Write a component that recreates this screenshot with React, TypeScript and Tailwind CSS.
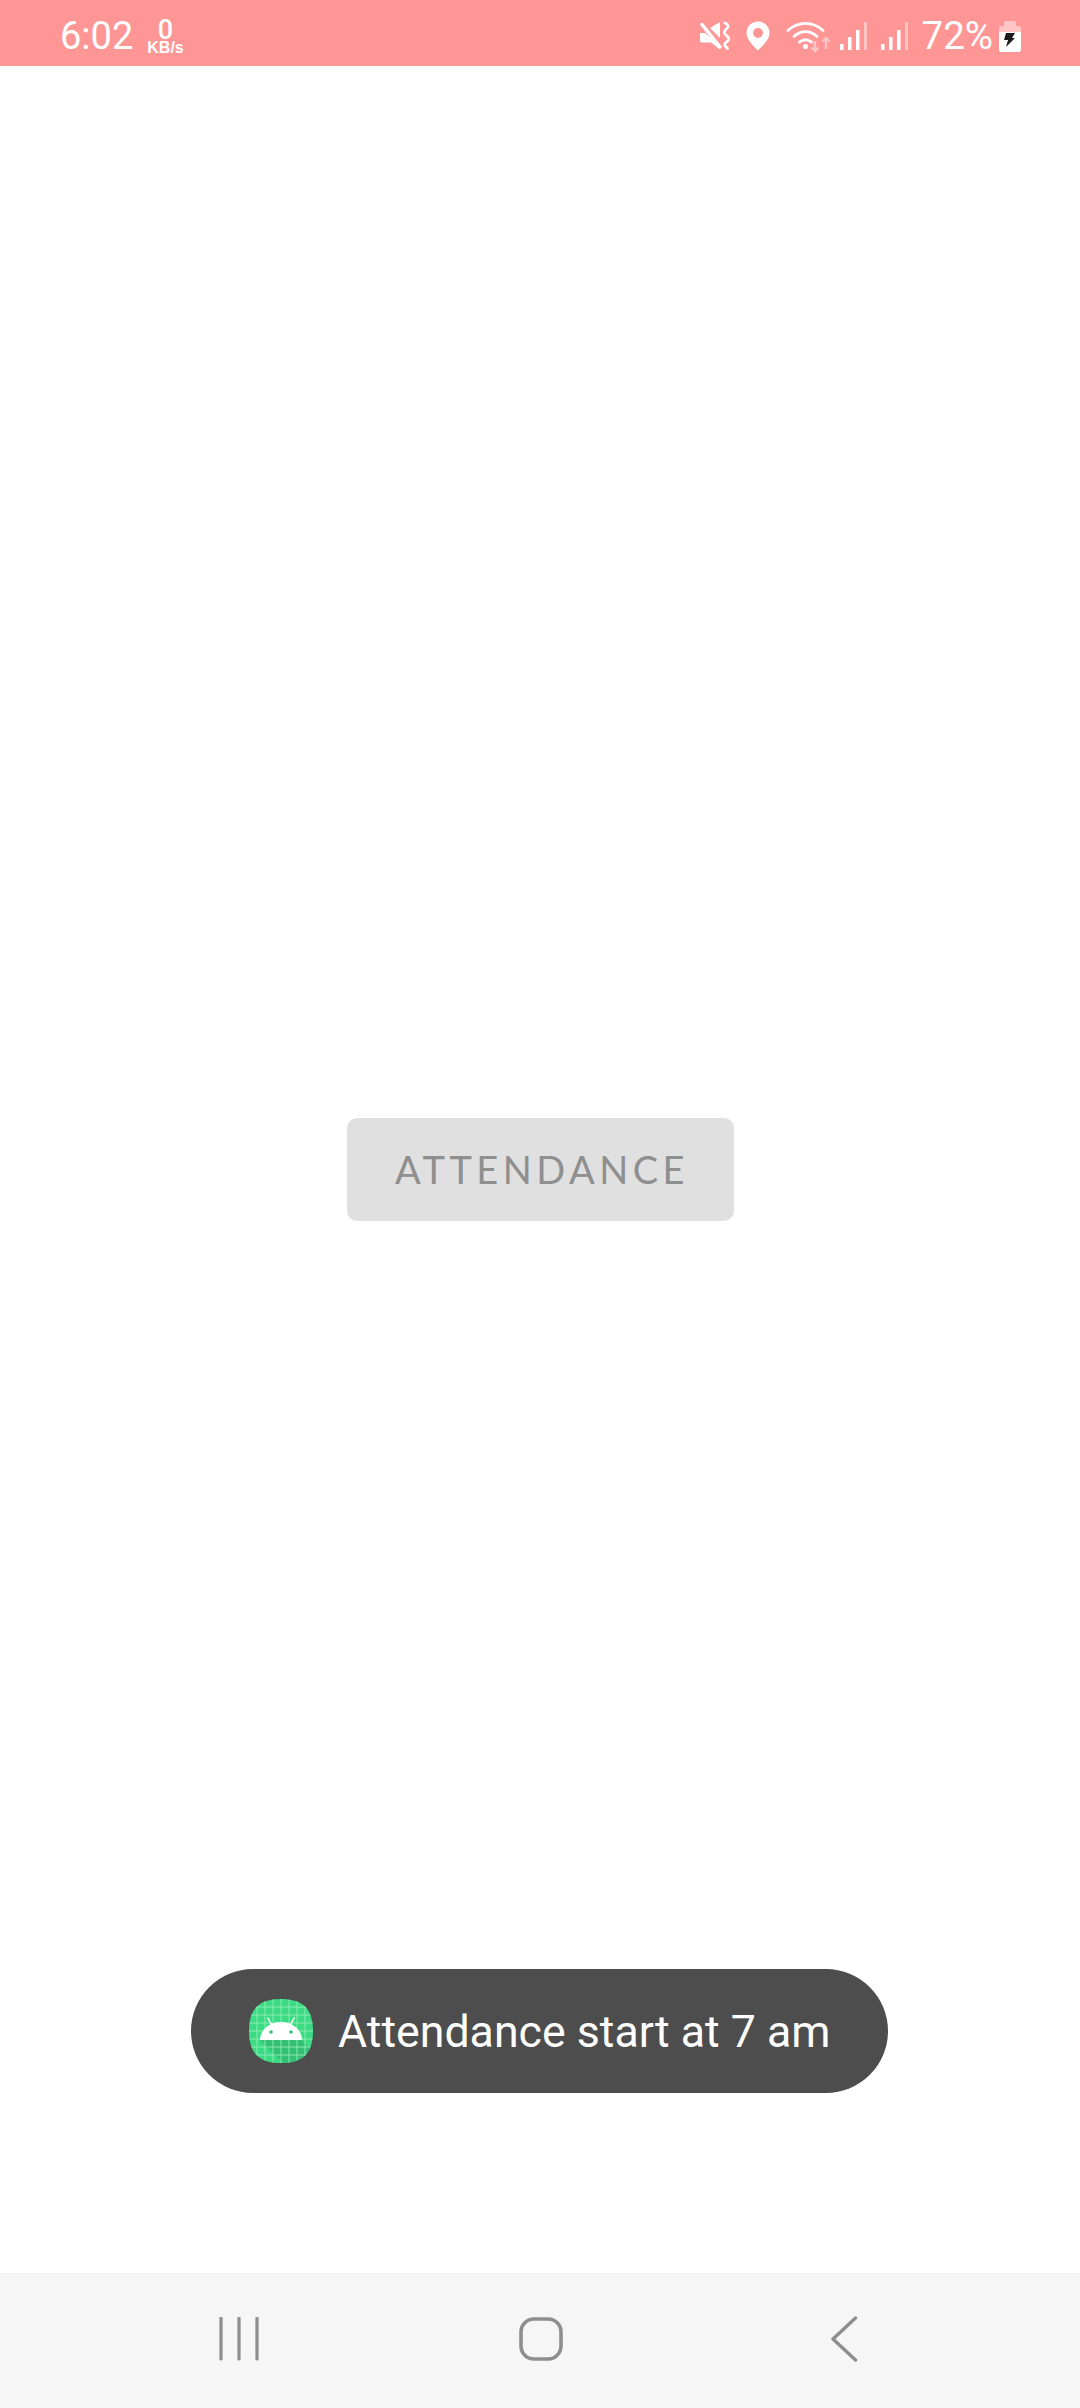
const roboto = "font-['Roboto',sans-serif]";

function Mute() {
  return (
    <svg width="30" height="30" viewBox="0 0 30 30" className="block">
      <path d="M0 12h5L20 25v3.500l-9-7H2a2 2 0 0 1-2-2z" fill="#fff" />
      <path d="M2 3.500L20 26" stroke="#fff" strokeWidth="3.500" strokeLinecap="round" />
      <path d="M10 7L20 1V17z" fill="#fff" />
      <path d="M25 2c4 2 4 4 1 6.500s-2 4 1 6.500 2 4-1 6.500 0 4 1.500 6" stroke="#fff" strokeWidth="2.800" fill="none" strokeLinecap="round" />
    </svg>
  );
}

function Pin() {
  return (
    <svg width="24" height="30" viewBox="0 0 24 30" className="block">
      <path fillRule="evenodd" d="M12 .5C5.4.5.5 5.6.5 12c0 6.800 7.500 13.500 11.500 17.500C16 25.500 23.500 18.800 23.500 12 23.500 5.600 18.600.5 12 .5zM12 7a5 5 0 1 1 0 10 5 5 0 0 1 0-10z" fill="#fff" />
    </svg>
  );
}

function Wifi() {
  return (
    <svg width="46" height="33" viewBox="0 0 46 33" className="block">
      <g fill="none" stroke="#fff" strokeWidth="2.800" strokeLinecap="round">
        <path d="M2 10.500C12 1 27 1 37 10.500" />
        <path d="M8 16.500C15 10 24 10 31 16.500" />
        <path d="M13.500 22c3.500-3 8.500-3 12 0" />
      </g>
      <circle cx="19.500" cy="26.500" r="2.600" fill="#fff" />
      <path d="M29 21v10m-3.500-3.500L29 31l3.500-3.500" fill="none" stroke="#ffc4c4" strokeWidth="2.400" />
      <path d="M40 29V18m-3.500 3.500L40 18l3.500 3.500" fill="none" stroke="#ffc4c4" strokeWidth="2.400" />
    </svg>
  );
}

function Signal() {
  return (
    <svg width="27" height="30" viewBox="0 0 27 30" className="block">
      <rect x="0" y="23" width="3.500" height="6" fill="#fff" />
      <rect x="8" y="16" width="3.500" height="13" fill="#fff" />
      <rect x="16" y="9" width="3.500" height="20" fill="#fff" />
      <rect x="24" y="1" width="3" height="28" fill="#ffc4c4" />
    </svg>
  );
}

function Battery() {
  return (
    <svg width="22" height="31" viewBox="0 0 22 31" className="block">
      <path d="M7 0h8a2 2 0 0 1 2 2v3h3a2 2 0 0 1 2 2v4H0V7a2 2 0 0 1 2-2h3V2a2 2 0 0 1 2-2z" fill="#ffc4c4" />
      <path d="M0 11h22v18a2 2 0 0 1-2 2H2a2 2 0 0 1-2-2z" fill="#fff" />
      <path d="M7 12h9l-3 5h3L7 26l2-7H5z" fill="#1c1c1c" />
    </svg>
  );
}

function AndroidIcon() {
  const grid = [8, 16, 24, 32, 40, 48, 56];
  return (
    <svg width="64" height="64" viewBox="0 0 64 64" className="block">
      <defs>
        <clipPath id="squircle">
          <path d="M32 0C52 0 64 8 64 32S52 64 32 64 0 56 0 32 12 0 32 0z" />
        </clipPath>
      </defs>
      <g clipPath="url(#squircle)">
        <rect width="64" height="64" fill="#3ddc84" />
        <path d="M11 41H53L64 52V64H34z" fill="#35bf74" />
        <g stroke="#8aeab4" strokeWidth="1">
          {grid.map((p) => (
            <path key={p} d={`M${p} 0V64M0 ${p}H64`} />
          ))}
        </g>
      </g>
      <path d="M18.500 18.500l4 7M45.500 18.500l-4 7" stroke="#fff" strokeWidth="1.500" />
      <path d="M11 41a21 18 0 0 1 42 0z" fill="#fff" />
      <circle cx="22" cy="33" r="1.800" fill="#35bf74" />
      <circle cx="42" cy="33" r="1.800" fill="#35bf74" />
    </svg>
  );
}

export default function App() {
  return (
    <div className="relative flex h-[2408px] w-[1080px] flex-col overflow-hidden bg-white">
      <header className={`flex h-[66px] items-center justify-between bg-[#ff9696] pl-[60px] pr-[59px] pt-[6px] text-white ${roboto}`}>
        <div className="flex items-center">
          <span className="text-[38px] leading-none">6:02</span>
          <div className="ml-[14px] flex flex-col items-center">
            <span className="text-[27px] font-medium leading-[22px]">0</span>
            <span className="font-['Liberation_Sans',sans-serif] text-[16px] font-bold leading-[13px]">KB/s</span>
          </div>
        </div>
        <div className="flex items-center">
          <Mute />
          <div className="ml-[16px]"><Pin /></div>
          <div className="ml-[16px]"><Wifi /></div>
          <div className="ml-[8px]"><Signal /></div>
          <div className="ml-[14px]"><Signal /></div>
          <span className="ml-[14px] text-[38.500px] leading-none">72%</span>
          <div className="ml-[6px]"><Battery /></div>
        </div>
      </header>

      <main className="flex flex-1 items-center justify-center">
        <button className="flex h-[103px] w-[387px] items-center justify-center rounded-[10px] bg-[#e0e0e0] pl-[4px] font-['Lato',sans-serif] text-[38px] tracking-[4.500px] text-[#8f8f8f]">
          ATTENDANCE
        </button>
      </main>

      <nav className="flex h-[135px] items-center bg-[#f6f6f6] pb-[3px] pl-[217px]">
        <svg width="44" height="44" viewBox="0 0 44 44" className="block">
          <path d="M4 1v41M22 1v41M40 1v41" stroke="#8e8e8e" strokeWidth="3.200" strokeLinecap="round" />
        </svg>
        <svg width="44" height="44" viewBox="0 0 44 44" className="ml-[258px] block">
          <rect x="2" y="2" width="40" height="40" rx="13" fill="none" stroke="#8e8e8e" strokeWidth="3.600" />
        </svg>
        <svg width="28" height="46" viewBox="0 0 28 46" className="ml-[267px] block">
          <path d="M25.500 2L3 23L25.500 44" fill="none" stroke="#8e8e8e" strokeWidth="3.400" strokeLinecap="round" strokeLinejoin="round" />
        </svg>
      </nav>

      <div className={`absolute left-[191px] top-[1969px] flex h-[124px] w-[697px] items-center rounded-full bg-[#4d4d4d] pl-[58px] ${roboto}`}>
        <AndroidIcon />
        <span className="ml-[25px] mt-[3px] text-[44.700px] leading-none text-white">Attendance start at 7 am</span>
      </div>
    </div>
  );
}
